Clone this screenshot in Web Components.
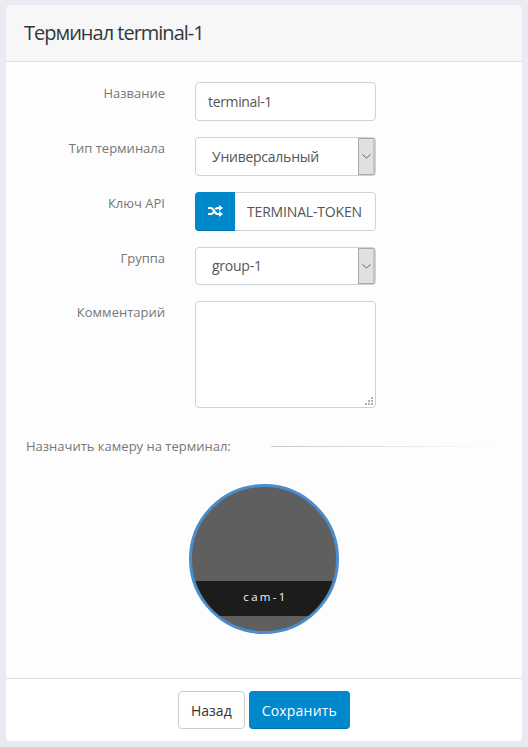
<!DOCTYPE html>
<html lang="ru">
<head>
<meta charset="utf-8">
<title>Терминал</title>
<style>
  html, body { margin: 0; height: 100%; }
  body { background: #e9ebf1; font-family: "Open Sans", sans-serif; color: #555; }
</style>
</head>
<body>
<terminal-card>
  <span slot="title">Терминал terminal-1</span>
  <form-row label="Название"><text-field>terminal-1</text-field></form-row>
  <form-row label="Тип терминала"><select-field>Универсальный</select-field></form-row>
  <form-row label="Ключ API"><token-field>TERMINAL-TOKEN</token-field></form-row>
  <form-row label="Группа"><select-field short>group-1</select-field></form-row>
  <form-row label="Комментарий"><comment-field></comment-field></form-row>
  <section-title>Назначить камеру на терминал:</section-title>
  <camera-tile name="cam-1"></camera-tile>
  <action-button slot="footer">Назад</action-button>
  <action-button slot="footer" primary>Сохранить</action-button>
</terminal-card>
<script>
/**
 * Defines a simple element from its shadow markup.
 *
 * @param {string} name of the element.
 * @param {string} html the shadow root content.
 * @returns {void}
 */
function simple (name, html) {
  const template = document.createElement('template')
  template.innerHTML = html
  customElements.define(name, class extends HTMLElement {
    constructor () {
      super()
      this.attachShadow({ mode: 'open' })
      this.shadowRoot.appendChild(template.content.cloneNode(true))
    }
  })
}

simple('terminal-card', `
  <style>
    :host { display: flex; flex-direction: column; margin: 5px 6px; height: 736px; background: #fdfdfd;
      border-radius: 5px; overflow: hidden; }
    header { height: 56px; background: #f7f7f7; border-bottom: 1px solid #dedede; padding-left: 18px;
      font-size: 20px; letter-spacing: -1px; line-height: 56px; color: #33383d; }
    main { flex: 1; padding-top: 20px; display: flex; flex-direction: column; }
    footer { height: 63px; background: #fff; border-top: 1px solid #dedede; display: flex; justify-content: center;
      gap: 4px; padding-top: 12px; box-sizing: border-box; }
  </style>
  <header><slot name="title"></slot></header>
  <main><slot></slot></main>
  <footer><slot name="footer"></slot></footer>
`)

const rowTemplate = document.createElement('template')
rowTemplate.innerHTML = `
  <style>
    :host { display: flex; margin-bottom: 16px; }
    label { width: 159px; text-align: right; font-size: 13px; line-height: 18px; padding-top: 2px; color: #777; }
    div { margin-left: 30px; width: 181px; }
  </style>
  <label></label><div><slot></slot></div>
`
customElements.define('form-row',
  /**
   * A label with its field on the right.
   */
  class extends HTMLElement {
    constructor () {
      super()
      this.attachShadow({ mode: 'open' })
      this.shadowRoot.appendChild(rowTemplate.content.cloneNode(true))
    }

    connectedCallback () {
      this.shadowRoot.querySelector('label').textContent = this.getAttribute('label')
    }
  }
)

simple('text-field', `
  <style>
    :host { display: block; box-sizing: border-box; height: 39px; border: 1px solid #ced1d7; border-radius: 4px;
      background: #fff; padding-left: 12px; font-size: 14px; letter-spacing: -.35px; line-height: 37px; color: #555; }
  </style>
  <slot></slot>
`)

simple('select-field', `
  <style>
    :host { display: flex; box-sizing: border-box; height: 39px; border: 1px solid #ced1d7; border-radius: 4px;
      background: #fff; font-size: 14px; letter-spacing: -.25px; line-height: 37px; color: #555; }
    :host([short]) { height: 38px; line-height: 36px; }
    span { flex: 1; padding-left: 16px; }
    i { box-sizing: border-box; width: 17px; background: #e0e0e0; border: 1px solid #a9a9a9; border-width: 1px 0 1px 1px;
      border-right: 2px solid #c4c4c4; display: flex; align-items: center; justify-content: center; }
    svg { display: block; }
  </style>
  <span><slot></slot></span>
  <i><svg width="9" height="5" viewBox="0 0 9 5"><path d="M.5.5l4 3.500 4-3.500" fill="none" stroke="#666" stroke-width="1"/></svg></i>
`)

simple('token-field', `
  <style>
    :host { display: flex; box-sizing: border-box; height: 39px; border: 1px solid #ced1d7; border-radius: 4px;
      background: #fff; font-size: 14px; line-height: 37px; color: #555; }
    i { width: 40px; margin: -1px 0 -1px -1px; background: #0088cc; border-bottom: 1px solid #0073ac; border-radius: 4px 0 0 4px;
      box-sizing: border-box; display: flex; align-items: center; justify-content: center; }
    span { padding-left: 12px; white-space: nowrap; letter-spacing: -.17px; }
  </style>
  <i><svg width="15" height="12" viewBox="0 0 15 12"><path d="M0 3h3c2.500 0 3.500 6 6.500 6H12M0 9h3c1 0 1.800-.8 2.400-1.800M7.300 4.300C7.900 3.500 8.600 3 9.500 3H12" fill="none" stroke="#fff" stroke-width="2.200"/><path d="M11 0l4 3-4 3zM11 6l4 3-4 3z" fill="#fff"/></svg></i>
  <span><slot></slot></span>
`)

simple('comment-field', `
  <style>
    :host { display: block; position: relative; box-sizing: border-box; height: 107px; border: 1px solid #ced1d7;
      border-radius: 4px; background: #fff; }
    svg { position: absolute; right: 2px; bottom: 2px; }
  </style>
  <svg width="8" height="8" viewBox="0 0 8 8" fill="#b0b0b0"><path d="M6 0h2v2H6zM3 3h2v2H3zM6 3h2v2H6zM0 6h2v2H0zM3 6h2v2H3zM6 6h2v2H6z"/></svg>
`)

simple('section-title', `
  <style>
    :host { display: flex; align-items: center; margin: 13px 0 0 20px; font-size: 13px; line-height: 18px; color: #777; }
    i { margin-left: 40px; width: 220px; height: 1px; background: linear-gradient(to right, #c8c8c8, #fdfdfd); }
  </style>
  <span><slot></slot></span><i></i>
`)

const cameraTemplate = document.createElement('template')
cameraTemplate.innerHTML = `
  <style>
    :host { display: block; box-sizing: border-box; width: 150px; height: 150px; margin: 29px auto 0; position: relative;
      border: 3px solid #4a8ccc; border-radius: 50%; background: #5f5f5f; overflow: hidden; }
    div { position: absolute; left: 0; right: 0; top: 94px; height: 35px; padding-left: 3px; background: #1c1c1c; color: #f0f4f8;
      font-size: 11.500px; line-height: 31px; letter-spacing: 2.300px; text-align: center; }
  </style>
  <div></div>
`
customElements.define('camera-tile',
  /**
   * A round camera tile with its name across it.
   */
  class extends HTMLElement {
    constructor () {
      super()
      this.attachShadow({ mode: 'open' })
      this.shadowRoot.appendChild(cameraTemplate.content.cloneNode(true))
    }

    connectedCallback () {
      this.shadowRoot.querySelector('div').textContent = this.getAttribute('name')
    }
  }
)

simple('action-button', `
  <style>
    :host { display: block; box-sizing: border-box; height: 38px; padding: 0 12px; border: 1px solid #ccc; border-radius: 4px;
      background: #fff; color: #333; font-size: 14px; line-height: 37px; }
    :host([primary]) { background: #0088cc; border-color: #0088cc; border-bottom-color: #0073ac; color: #fff; letter-spacing: .2px; }
  </style>
  <slot></slot>
`)
</script>
</body>
</html>
